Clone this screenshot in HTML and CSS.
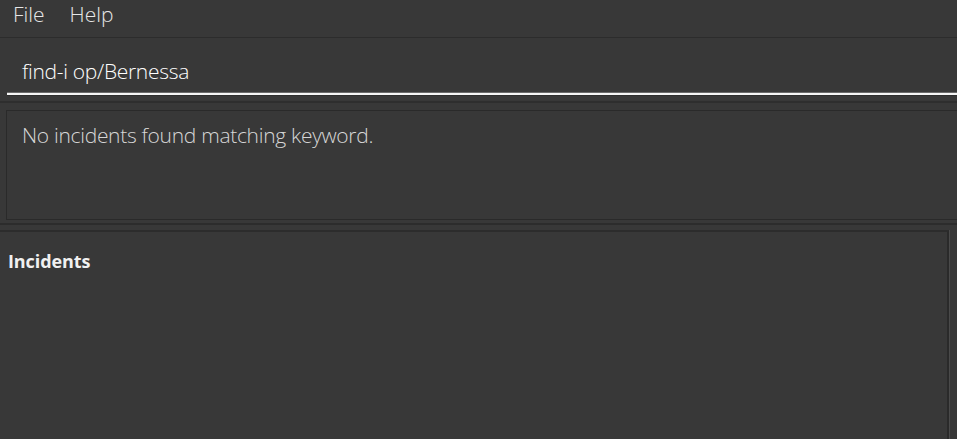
FILE: index.html
```html
<!DOCTYPE html>
<html>
<head>
<meta charset="utf-8">
<link rel="stylesheet" href="styles.css">
</head>
<body>
<div class="app">
  <div class="menubar">
    <span class="menu-item">File</span>
    <span class="menu-item">Help</span>
  </div>
  <div class="command-pane">
    <div class="command-box">find-i op/Bernessa</div>
  </div>
  <div class="result-pane">
    <div class="result-box">No incidents found matching keyword.</div>
  </div>
  <div class="list-pane">
    <div class="list-panel">
      <div class="list-title">Incidents</div>
    </div>
  </div>
</div>
</body>
</html>
```
FILE: styles.css
```css
html, body {
  margin: 0;
  padding: 0;
  background: #383838;
  overflow: hidden;
}
.app {
  width: 957px;
  height: 439px;
  display: flex;
  flex-direction: column;
  font-family: "Open Sans", "Noto Sans", sans-serif;
  background: #383838;
}
.menubar {
  height: 37px;
  border-bottom: 1px solid #2c2c2c;
  display: flex;
  align-items: flex-start;
  gap: 25px;
  padding-left: 13px;
  box-sizing: content-box;
}
.menu-item {
  color: #e6e6e6;
  font-size: 21px;
  line-height: 29px;
  font-weight: 300;
  letter-spacing: 0px;
}
.command-pane {
  height: 63px;
  padding: 0 0 0 7px;
  border-bottom: 2px solid #2e2e2e;
  box-sizing: content-box;
  display: flex;
  align-items: flex-end;
}
.command-box {
  flex: 1;
  height: 44px;
  padding: 0 0 0 15px;
  color: #ffffff;
  font-size: 21px;
  font-weight: 300;
  line-height: 44px;
  border-bottom: 2px solid #f5f5f5;
  box-shadow: 0 -1px 0 #6a6a6a inset, 0 1px 0 #2e2e2e;
  margin-bottom: 6px;
  letter-spacing: -0.3px;
}
.result-pane {
  height: 122px;
  padding: 7px 0 0 6px;
  box-sizing: border-box;
  border-bottom: 2px solid #2c2c2c;
}
.result-box {
  height: 110px;
  box-sizing: border-box;
  border: 1px solid #2a2a2a;
  border-right: none;
  padding: 10px 0 0 15px;
  color: #d6d6d6;
  font-size: 21px;
  font-weight: 300;
  line-height: 28px;
  letter-spacing: -0.3px;
}
.list-pane {
  flex: 1;
  padding: 5px 8px 0 0;
  background: #383838;
}
.list-panel {
  height: 100%;
  border-top: 2px solid #2c2c2c;
  border-right: 2px solid #2a2a2a;
  box-shadow: 1px 0 0 #4a4a4a;
  box-sizing: border-box;
  padding: 16px 0 0 8px;
}
.list-title {
  color: #f0f0f0;
  font-weight: 700;
  font-size: 18px;
  line-height: 26px;
  letter-spacing: -0.1px;
}
```
